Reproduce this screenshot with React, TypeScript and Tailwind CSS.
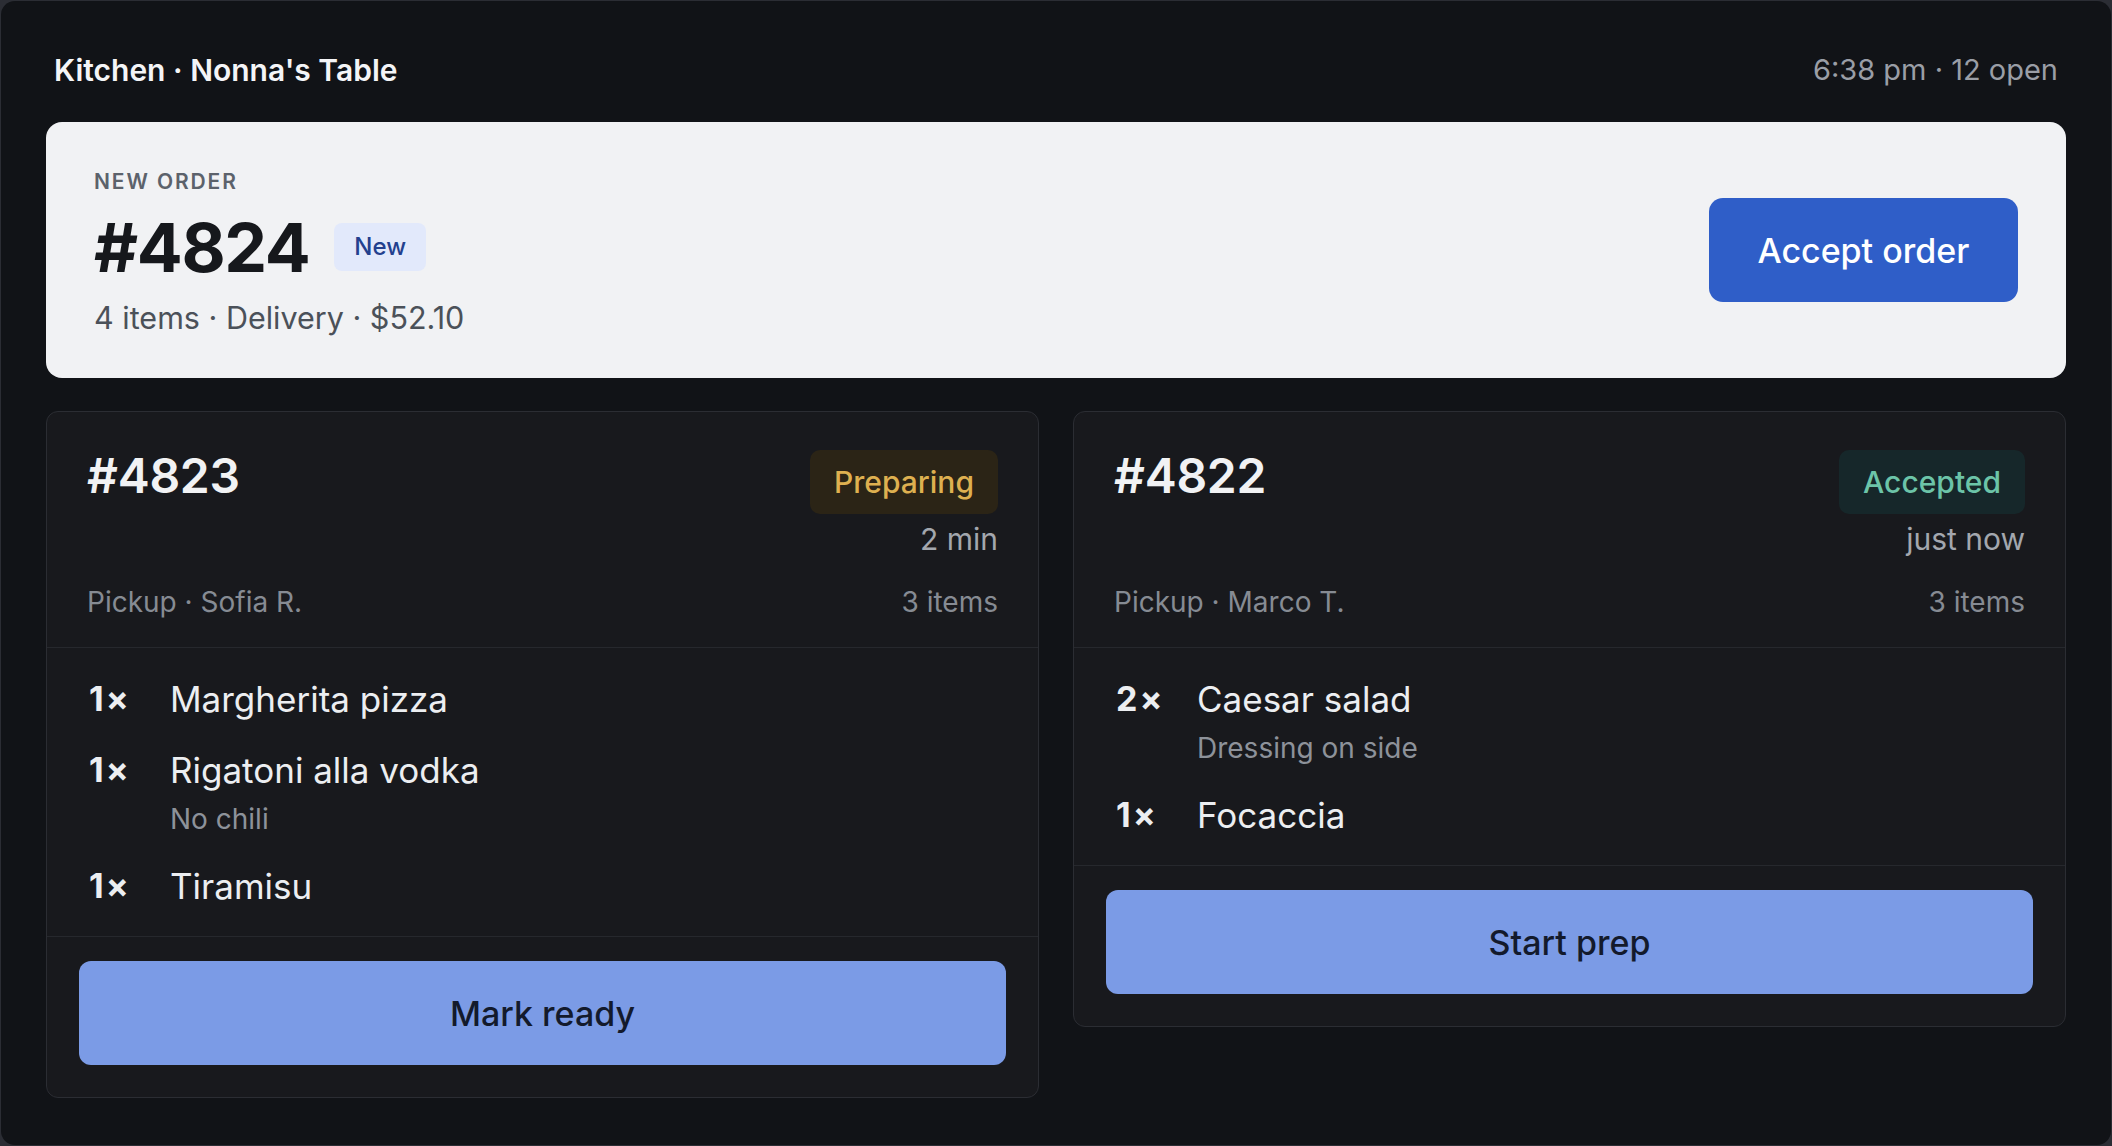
type Item = { qty: number; name: string; note?: string };

interface Order {
  id: string;
  status: 'Preparing' | 'Accepted';
  age: string;
  customer: string;
  items: Item[];
  action: string;
}

const orders: Order[] = [
  {
    id: '#4823',
    status: 'Preparing',
    age: '2 min',
    customer: 'Pickup · Sofia R.',
    items: [
      { qty: 1, name: 'Margherita pizza' },
      { qty: 1, name: 'Rigatoni alla vodka', note: 'No chili' },
      { qty: 1, name: 'Tiramisu' },
    ],
    action: 'Mark ready',
  },
  {
    id: '#4822',
    status: 'Accepted',
    age: 'just now',
    customer: 'Pickup · Marco T.',
    items: [
      { qty: 2, name: 'Caesar salad', note: 'Dressing on side' },
      { qty: 1, name: 'Focaccia' },
    ],
    action: 'Start prep',
  },
];

function StatusBadge({ status }: { status: Order['status'] }) {
  const tone =
    status === 'Preparing' ? 'bg-[#2b2416] text-[#deb050]' : 'bg-[#16272a] text-[#6cc4a8]';
  return (
    <span className={`flex h-[64px] items-center rounded-[10px] px-[24px] text-[30px] font-medium leading-none ${tone}`}>
      {status}
    </span>
  );
}

function OrderCard({ order }: { order: Order }) {
  const count = order.items.reduce((n, i) => n + i.qty, 0);
  return (
    <div className="flex flex-col self-start rounded-[12px] border border-[#2b2d33] bg-[#18191d]">
      {/* Header */}
      <div className="px-[40px] pt-[38px] pb-[27px]">
        <div className="flex items-start justify-between">
          <h2 className="mt-[-3px] text-[48px] font-semibold leading-[1.2] tracking-[-0.005em] text-[#f1f2f4]">
            {order.id}
          </h2>
          <div className="flex flex-col items-end">
            <StatusBadge status={order.status} />
            <span className="mt-[7px] text-[30px] leading-[36px] text-[#a3a7ae]">{order.age}</span>
          </div>
        </div>
        <div className="mt-[27px] flex items-center justify-between text-[28px] leading-[36px] text-[#868b93]">
          <span>{order.customer}</span>
          <span>{count} items</span>
        </div>
      </div>

      {/* Items */}
      <ul className="flex flex-col gap-[27px] border-t border-[#26282d] px-[40px] pt-[29px] pb-[28px]">
        {order.items.map((item) => (
          <li key={item.name} className="flex">
            <span className="w-[83px] shrink-0 pl-[2px] text-[34px] font-bold leading-[44px] tracking-[0.06em] text-[#eceef1]">
              {item.qty}×
            </span>
            <div className="flex flex-col">
              <span className="text-[35px] leading-[44px] text-[#eceef1]">{item.name}</span>
              {item.note && (
                <span className="mt-[9px] text-[28px] leading-[36px] text-[#8d929a]">{item.note}</span>
              )}
            </div>
          </li>
        ))}
      </ul>

      {/* Action */}
      <div className="border-t border-[#26282d] px-[32px] pt-[24px] pb-[32px]">
        <button className="flex h-[104px] w-full items-center justify-center rounded-[12px] bg-[#7b9be6] text-[34px] font-medium text-[#131a2c]">
          {order.action}
        </button>
      </div>
    </div>
  );
}

export default function App() {
  return (
    <div
      className="h-screen bg-[#2b2d34] p-px"
      style={{ fontFamily: 'Inter, "Noto Sans", "Liberation Sans", sans-serif' }}
    >
      <div className="h-full overflow-hidden rounded-[14px] bg-[#111317] px-[45px] pt-[51px]">
        {/* Top bar */}
        <header className="flex items-center justify-between px-[8px] leading-[36px]">
          <span className="text-[30px] font-semibold text-[#f4f5f7]">Kitchen · Nonna's Table</span>
          <span className="text-[29px] text-[#9a9ea6]">6:38 pm · 12 open</span>
        </header>

        {/* Incoming order */}
        <section className="mt-[34px] flex h-[256px] items-center justify-between rounded-[16px] bg-[#f1f2f4] px-[48px]">
          <div className="flex flex-col pt-[4px]">
            <span className="text-[21px] font-semibold leading-[28px] tracking-[0.09em] text-[#5c626b]">
              NEW ORDER
            </span>
            <div className="mt-[17px] flex items-center gap-[25px]">
              <span className="text-[68px] font-bold leading-none tracking-[-0.02em] text-[#16181c]">#4824</span>
              <span className="flex h-[48px] items-center rounded-[8px] bg-[#e2e9fb] px-[20px] text-[24px] font-medium text-[#23408e]">
                New
              </span>
            </div>
            <span className="mt-[19px] text-[30.5px] leading-[36px] text-[#4b5159]">
              4 items · Delivery · $52.10
            </span>
          </div>
          <button className="flex h-[104px] w-[309px] items-center justify-center rounded-[14px] bg-[#2f5ec8] text-[34px] font-medium text-white">
            Accept order
          </button>
        </section>

        {/* Active orders */}
        <div className="mt-[33px] grid grid-cols-2 items-start gap-[34px]">
          {orders.map((o) => (
            <OrderCard key={o.id} order={o} />
          ))}
        </div>
      </div>
    </div>
  );
}
